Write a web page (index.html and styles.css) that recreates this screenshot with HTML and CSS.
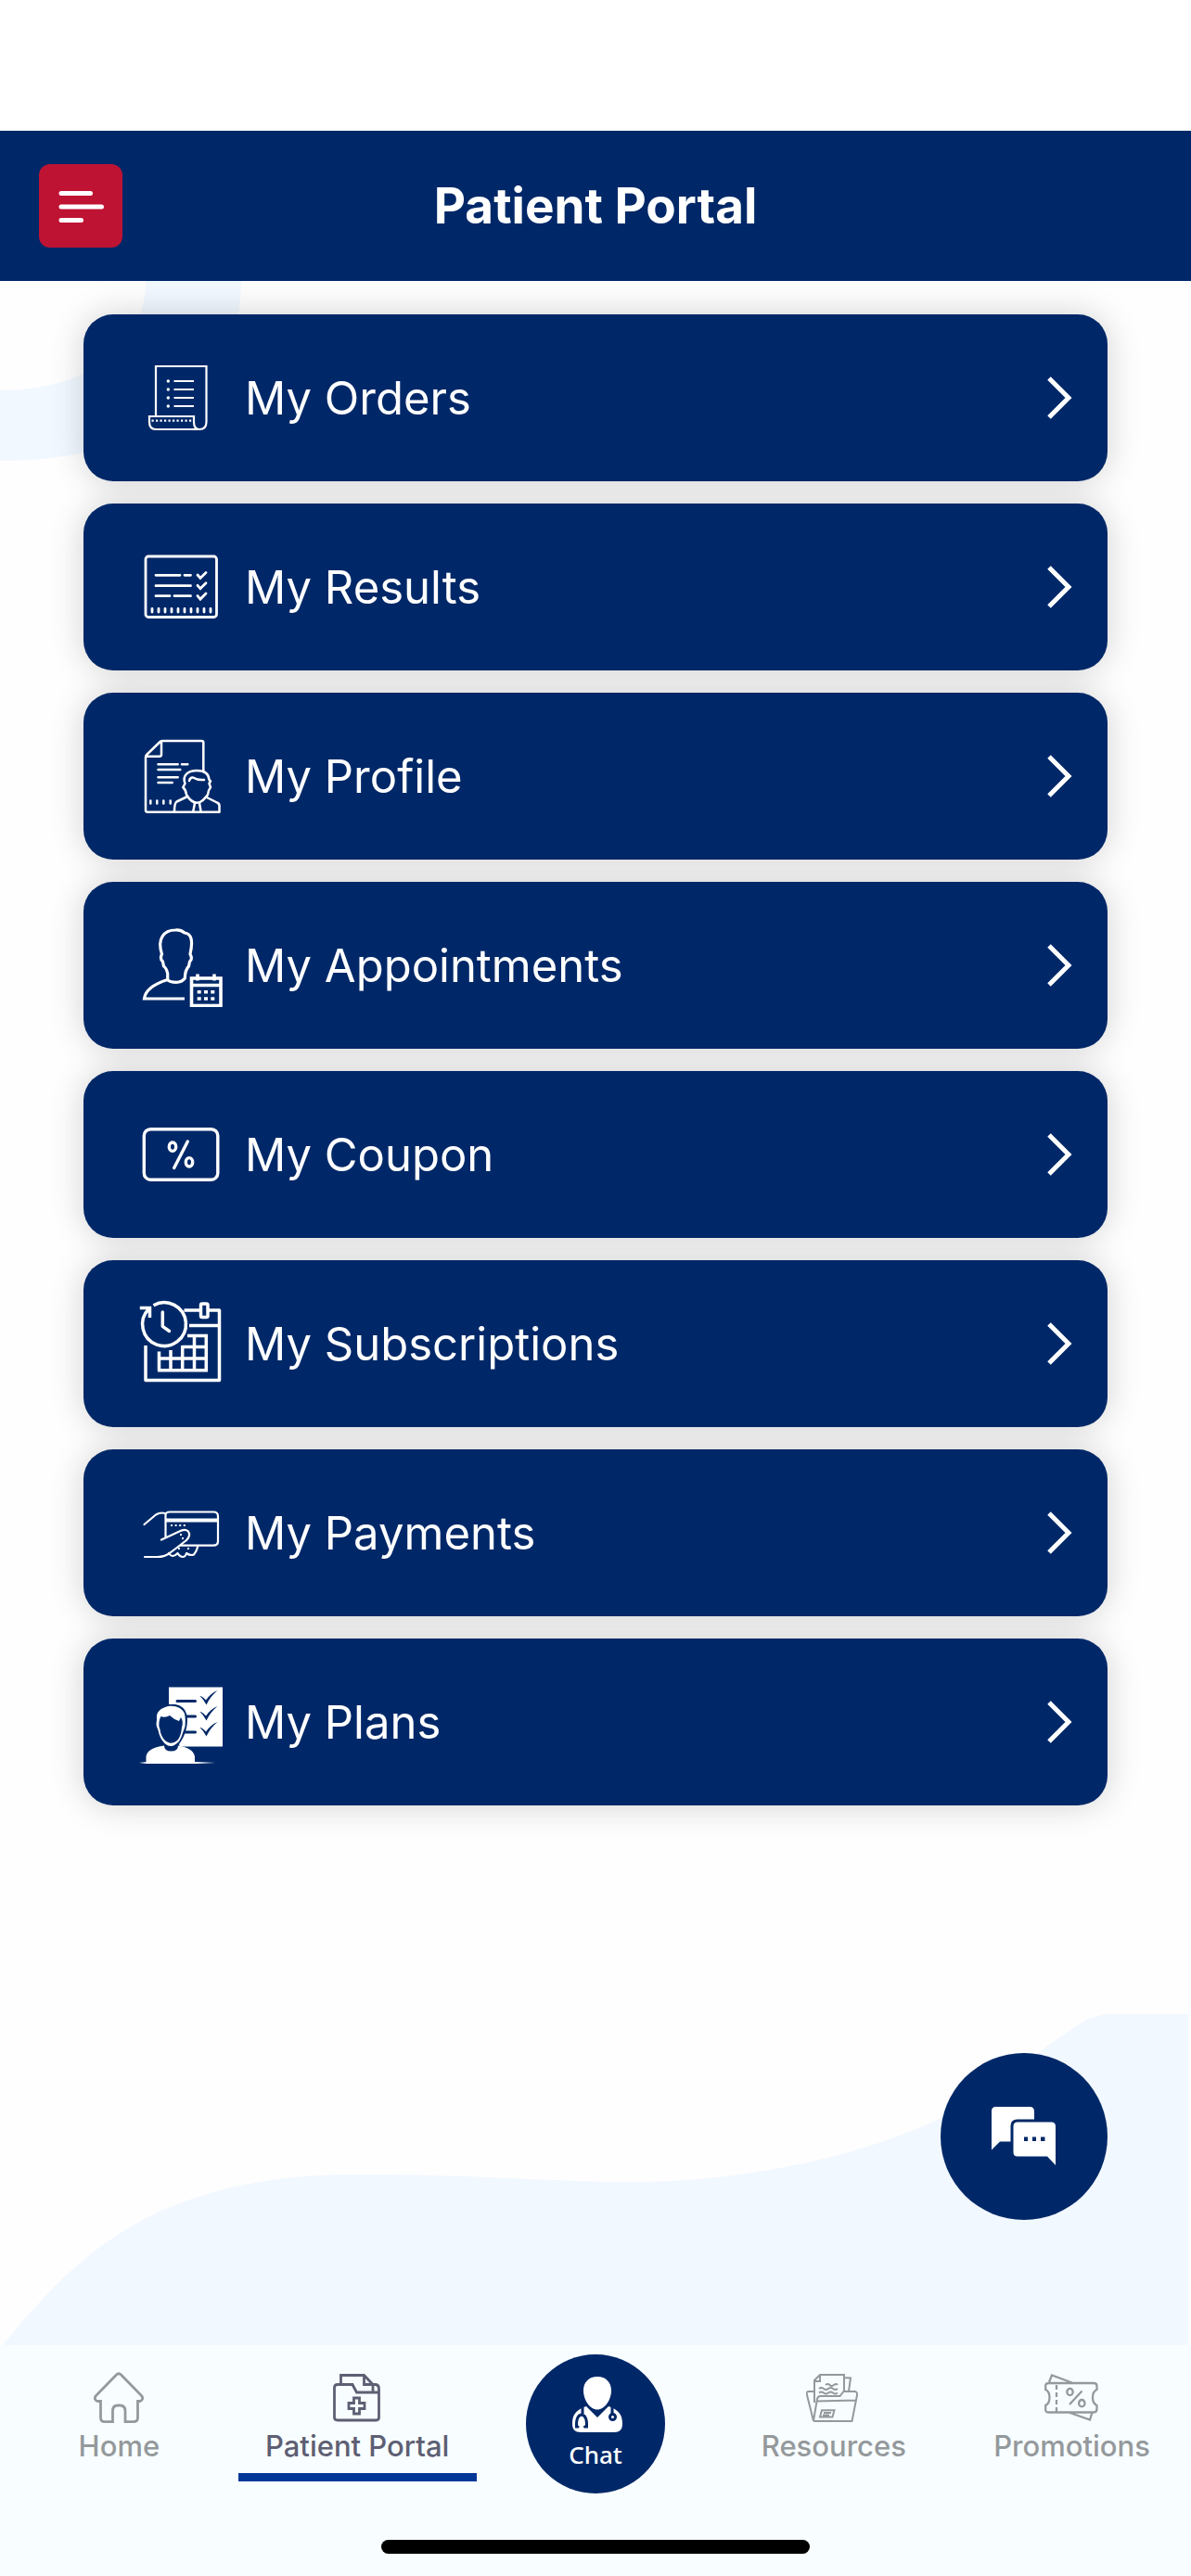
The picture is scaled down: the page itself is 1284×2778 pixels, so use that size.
FILE: index.html
```html
<!DOCTYPE html>
<html lang="en">
<head>
<meta charset="utf-8">
<meta name="viewport" content="width=device-width, initial-scale=1">
<title>Patient Portal</title>
<link rel="stylesheet" href="styles.css">
</head>
<body>
<div class="app">
  <header class="header">
    <button class="menu-button" type="button" aria-label="Menu">
      <svg viewBox="0 0 90 90" aria-hidden="true"><path d="M24 31.500H55.500M24 46H67.500M24 60.500H45.500"/></svg>
    </button>
    <h1 class="title">Patient Portal</h1>
  </header>

  <main class="main">
    <svg class="ring" viewBox="0 0 262 196" aria-hidden="true"><path d="M157 0C157 70 95 118 0 118V194C150 194 260 130 260 0Z"/></svg>
    <svg class="wave" viewBox="0 0 1284 357" preserveAspectRatio="none" aria-hidden="true"><path d="M3 357C70 278 150 174 380 173C500 172 600 181 680 181C830 181 960 142 1030 104C1090 70 1115 42 1150 20C1170 6 1180 0 1200 0H1281V357Z"/></svg>

    <ul class="list">
      <li><a class="card" href="#orders">
        <svg class="icon" viewBox="0 0 90 90" aria-hidden="true">
          <g stroke-width="2.200"><path d="M18 64.500V11H72.500V71Q72.500 79 65 79H18Q11 79 11 71V65H59V71Q59 79 65 79M37.500 27H59M37.500 36H59M37.500 45H59M37.500 54H59"/><path stroke-width="3.400" stroke-linecap="round" d="M31.300 27h.01M31.300 36h.01M31.300 45h.01M31.300 54h.01"/><path stroke-dasharray="2.200 2.300" d="M13.500 69.700H56.500"/></g>
        </svg>
        <span class="label">My Orders</span>
        <svg class="chevron" viewBox="0 0 28 48" aria-hidden="true"><path d="M3 3L24 24L3 45"/></svg>
      </a></li>
      <li><a class="card" href="#results">
        <svg class="icon" viewBox="0 0 90 90" aria-hidden="true">
          <rect x="7" y="12" width="76.500" height="65.500" rx="3"/>
          <path stroke-linecap="round" d="M18 32.300H44M49 32.300H55.500M18 43.700H55.500M18 54.700H33M38 54.700H55.500M63 32L66 35.500L72 29.500M63 43.300L66 46.800L72 40.800M63 54.600L66 58.100L72 52.100"/>
          <path stroke-linecap="round" d="M14 68.500v3.500M21 68.500v3.500M28 68.500v3.500M35 68.500v3.500M42 68.500v3.500M49 68.500v3.500M56 68.500v3.500M63 68.500v3.500M70 68.500v3.500M77 68.500v3.500"/>
        </svg>
        <span class="label">My Results</span>
        <svg class="chevron" viewBox="0 0 28 48" aria-hidden="true"><path d="M3 3L24 24L3 45"/></svg>
      </a></li>
      <li><a class="card" href="#profile">
        <svg class="icon" viewBox="0 0 90 90" aria-hidden="true">
          <g stroke-linecap="round" stroke-linejoin="round" stroke-width="2.500">
          <path d="M69.300 40V9Q69.300 7 67.300 7H25Q23 7 22 8.500L8 22Q7 23 7 25V81.500Q7 83.700 9 83.700H86.500V77Q86.500 74.500 84 73.500L72 67.500M24 8V21.500Q24 23.700 22 23.700H8"/>
          <path d="M20.500 32.300H41.700M46 32.300H52.300M20.500 38H44.300M20.500 46.300H41.700M20.500 52H35.700M12.300 71.500v3M19.300 71.500v3M26.300 71.500v3M33.700 71.500v3"/>
          <path d="M49.500 53C46 44 53 39 62.300 39C70 39 75 42 75.500 49L77 50.500L75.500 53L77 57Q74.500 60 74 65C70 70 67 73.700 62.300 73.700C58 73.700 54 70 51 65Q50.500 60 47.300 57Z"/>
          <path d="M54 50Q55 46 58 46.500Q63 49.500 70 49M51 67.500L40.500 72.500Q38 74 38 83M60 74L58.300 83M65 74L66.500 83"/>
          </g>
        </svg>
        <span class="label">My Profile</span>
        <svg class="chevron" viewBox="0 0 28 48" aria-hidden="true"><path d="M3 3L24 24L3 45"/></svg>
      </a></li>
      <li><a class="card" href="#appointments">
        <svg class="icon" viewBox="0 0 90 90" aria-hidden="true">
          <path stroke-width="3.200" d="M30.700 60.500V54Q29.500 48 26.500 46L25.500 41Q22 38 24.500 33C19 16 27 7 39 7Q45 6.500 49 10Q60 11 55 33Q58 38 54.500 41L53.500 46Q49.500 50 49.300 59Q46 63.300 40 63.300Q33 63.300 30.700 60.500Q7 68 5.500 81H49"/>
          <g stroke-width="3.600"><rect x="56.500" y="59" width="31.500" height="29.500"/><path d="M55 66.500H89"/><path d="M63 54.500V61.500M81 54.500V61.500"/><path stroke-dasharray="4 3.300" d="M62.700 73.700H81.500M62.700 81H81.500"/></g>
        </svg>
        <span class="label">My Appointments</span>
        <svg class="chevron" viewBox="0 0 28 48" aria-hidden="true"><path d="M3 3L24 24L3 45"/></svg>
      </a></li>
      <li><a class="card" href="#coupon">
        <svg class="icon" viewBox="0 0 90 90" aria-hidden="true">
          <g stroke-width="3.400"><rect x="5.300" y="17.700" width="79.500" height="54.500" rx="7"/><ellipse cx="36" cy="36.700" rx="3.700" ry="4.700"/><ellipse cx="54" cy="53.300" rx="3.700" ry="4.700"/><path stroke-linecap="round" d="M52.300 31L37.700 59.500"/></g>
        </svg>
        <span class="label">My Coupon</span>
        <svg class="chevron" viewBox="0 0 28 48" aria-hidden="true"><path d="M3 3L24 24L3 45"/></svg>
      </a></li>
      <li><a class="card" href="#subscriptions">
        <svg class="icon icon-open" viewBox="0 0 90 90" aria-hidden="true">
          <g stroke-width="3.500"><path d="M15.500 3.700A23.400 23.400 0 1 1 10.500 7.500M.800 6.500H11.500V17"/><path stroke-linecap="round" stroke-linejoin="round" d="M25.300 11V26.300L32.500 31.500"/>
          <path stroke-linejoin="round" d="M48.500 9H66.500M75 9H86.500V84.500H7V47M54 25.500H86.500"/><rect x="66.500" y="2" width="7.500" height="14.500" rx="1.500"/>
          <path d="M52 36.500H74M46.700 48.500H72.300M20 61H72.300M20 73.700H74M21.500 53.500V73.700M34 52V73.700M46.700 47V73.700M59.500 36V73.700M72.300 36V73.700"/></g>
        </svg>
        <span class="label">My Subscriptions</span>
        <svg class="chevron" viewBox="0 0 28 48" aria-hidden="true"><path d="M3 3L24 24L3 45"/></svg>
      </a></li>
      <li><a class="card" href="#payments">
        <svg class="icon" viewBox="0 0 90 90" aria-hidden="true">
          <g stroke-width="2.200" stroke-linejoin="round"><path d="M28.500 51V26Q28.500 22.500 33 22.500H80Q85 22.500 85 27V54Q85 58.700 80 58.700H44"/><path stroke-width="3.800" d="M28.500 31.500H85"/>
          <path stroke-linecap="round" d="M5.500 36L18 25.500Q23 22.500 28 24M24 52.500L45 42.800Q50 40.500 53 43.500Q56 48 51 53Q37 64 32 67.500Q27 71 20 71H6M32 67Q36 73 41.500 67Q44 71 47 71Q50 71 51 67Q55 70 59 68.500Q62 65 63.300 59.500"/>
          <path stroke-dasharray="2 2.600" d="M34 37H50"/><path d="M44 47h2M46 51h2M42 62h2M52 62h2"/></g>
        </svg>
        <span class="label">My Payments</span>
        <svg class="chevron" viewBox="0 0 28 48" aria-hidden="true"><path d="M3 3L24 24L3 45"/></svg>
      </a></li>
      <li><a class="card" href="#plans">
        <svg class="icon" viewBox="0 0 90 90" aria-hidden="true">
          <defs><linearGradient id="ground"><stop offset="0" stop-color="#fff" stop-opacity="0"/><stop offset=".1" stop-color="#fff"/><stop offset=".75" stop-color="#fff"/><stop offset="1" stop-color="#fff" stop-opacity="0"/></linearGradient></defs>
          <path class="solid" d="M32 7.500H90V71.500H32Z"/>
          <path class="cut-line" d="M41 22.500H60.500M41 39H60.500M41 56H60.500"/>
          <path class="cut" d="M65.500 17Q68 17 72 21.500Q77 14 84.500 11Q77 17 72.500 26.500Q69 20 65.500 17ZM65.500 34Q68 34 72 38.500Q77 31 84.500 28Q77 34 72.500 43.500Q69 37 65.500 34ZM65.500 51Q68 51 72 55.500Q77 48 84.500 45Q77 51 72.500 60.500Q69 54 65.500 51Z"/>
          <path class="cut" d="M17 48C15 33 22 25 35 26C48 25 54 35 51.500 49C50 58 46 65 43 69L45 75H25L27 68C20 61 18 56 17 48Z"/>
          <path class="solid" d="M7.500 89V83Q8 73 27 70.500Q27 76.500 34.500 76.500Q42 76.500 42 70.500Q59 73 60 83V89Z"/>
          <path class="solid" d="M19 50C18 45 19 46 19 42C18 33 24 31 28 29C35 26 46 28 49 36C50 41 50 45 49.500 50L48 54Q46 61 43 66Q38 71 34.500 71Q29 71 25 65Q22 61 20.500 54Z"/>
          <path class="cut" d="M21.500 50Q21 43 23.500 39Q28 41 33 38Q37 42 43 44L45 40Q48 45 46 51Q45 61 41 65Q34 71 27 64Q23 59 22.500 53Z"/>
          <rect x="0" y="88" width="82" height="2" fill="url(#ground)" stroke="none"/>
        </svg>
        <span class="label">My Plans</span>
        <svg class="chevron" viewBox="0 0 28 48" aria-hidden="true"><path d="M3 3L24 24L3 45"/></svg>
      </a></li>
    </ul>

    <button class="fab" type="button" aria-label="Messages">
      <svg viewBox="0 0 70 64" aria-hidden="true"><path d="M4.500 0H41Q46 0 46 5V13.500H28Q20.500 13.500 20.500 21V37.500H9L0 46.500V4.500Q0 0 4.500 0Z"/><path fill-rule="evenodd" d="M28 16.500H64.500Q69 16.500 69 21V63L60 53.500H28Q23.500 53.500 23.500 49V21Q23.500 16.500 28 16.500ZM35 32.500V37H39V32.500ZM44 32.500V37H48V32.500ZM53 32.500V37H57.500V32.500Z"/></svg>
    </button>
  </main>

  <footer class="footer">
    <nav class="tabs" aria-label="Main">
      <a class="tab" href="#home">
        <svg class="tab-icon" viewBox="0 0 60 60" aria-hidden="true"><g stroke-width="2.800"><path d="M27.500 5Q30 2.500 32.500 5L55 28Q57 32 53 33.500H50.500V51Q50.500 55.700 46 55.700H37V44Q37 38 31 38H29Q23.500 38 23.500 44V55.700H14.500Q10.500 55.700 10.500 51V33.500H7Q3 32 5 28Z"/></g></svg>
        <span>Home</span>
      </a>
      <a class="tab tab-active" href="#portal" aria-current="page">
        <svg class="tab-icon" viewBox="0 0 60 60" aria-hidden="true"><g stroke-width="2.800"><path d="M12.500 15V5.500H37.500L47 15.500M37.500 5.500V15.500H50Q53.500 16 53.500 20V51Q53.500 54 50.500 54H9Q5.500 54 5.500 51V19Q5.500 15.500 9 15.500H25L29.500 24H53.500M47 16V24"/><path d="M26.500 30H32.500V35.500H38V41.500H32.500V47H26.500V41.500H21V35.500H26.500Z"/></g></svg>
        <span>Patient Portal</span>
      </a>
      <div class="chat-slot">
        <a class="chat" href="#chat">
          <svg class="chat-icon" viewBox="0 0 60 60" aria-hidden="true"><path class="solid" d="M32 0C41 0 47 6 47 15C47 25 40 35.500 32 35.500C24 35.500 17 25 17 15C17 6 23 0 32 0ZM20 32L32 44L44 32C56 36 59 42 59 51C59 57 56 60 50 60H14C8 60 5 57 5 51C5 42 8 36 20 32Z"/><path class="cut-line" d="M16 33V41M11 54H9.500Q9 42 15 41Q21 42 20.500 54H18.500M48 33V40"/><circle class="cut-line" cx="48.500" cy="43.500" r="3"/></svg>
          <span>Chat</span>
        </a>
      </div>
      <a class="tab" href="#resources">
        <svg class="tab-icon" viewBox="0 0 60 60" aria-hidden="true"><g stroke-width="2"><path d="M9 35V11L15 5H41V23M15 5V12H9M41 8L48 8.500L46 23M9 23H3Q0 23 .8 26L8 54.700L12 31Q12.500 28 16 28H36.500L40.500 23H52Q55.500 23 55 27L49.500 55H8M11 33.500L54 32.500M17 43.300H30.500L28.500 50.500H15ZM19 46H27M18 48.500H25"/><path d="M21 16q2.500-2 4.500 0t4.500 0t4 0M14 20q2.500-2 5 0t5 0t5 0t5 0M14 24.500q2.500-2 5 0t5 0t5 0t5 0"/></g></svg>
        <span>Resources</span>
      </a>
      <a class="tab" href="#promotions">
        <svg class="tab-icon" viewBox="0 0 60 60" aria-hidden="true"><g stroke-width="2.300"><path d="M5 14H53Q56.500 14 56.500 17V21Q52 23 52 29.500Q52 36 56.500 38V42Q56.500 45.500 53 45.500H4Q1 45.500 1.200 42V38Q5.500 36 5.500 29.500Q5.500 23 1.200 21V17Q1 14 5 14ZM5 13L8 5.500L31 14M26 45.500L49 53.500L51.500 45.500"/><path stroke-dasharray="5 3" d="M13 16V45"/><ellipse cx="27.500" cy="23.500" rx="3.200" ry="3.700"/><ellipse cx="40.300" cy="35.700" rx="3.200" ry="3.700"/><path d="M40.500 22.500L27 37"/></g></svg>
        <span>Promotions</span>
      </a>
    </nav>
    <div class="home-indicator"></div>
  </footer>
</div>
</body>
</html>
```
FILE: styles.css
```css
:root {
  --navy: #002868;
  --red: #bf1334;
  --tint: #f2f8ff;
  --footer: #f8fdff;
  --muted: #94999c;
  --active: #5d5f73;
}

* { box-sizing: border-box; }

body {
  margin: 0;
  background: #fff;
  font-family: Inter, "Liberation Sans", sans-serif;
}

a { text-decoration: none; }
button { border: 0; padding: 0; font: inherit; cursor: pointer; }
svg { display: block; fill: none; }

.app {
  display: flex;
  flex-direction: column;
  min-height: 100vh;
  padding-top: 141px;
}

.header {
  display: grid;
  grid-template-columns: 90px 1fr 90px;
  align-items: center;
  padding: 36px 42px;
  background: var(--navy);
}

.menu-button {
  height: 90px;
  border-radius: 12px;
  background: var(--red);
}
.menu-button path { stroke: #fff; stroke-width: 5; stroke-linecap: round; }

.title {
  margin: 0;
  color: #fff;
  font-size: 53px;
  font-weight: 700;
  line-height: 60px;
  text-align: center;
}

.main {
  position: relative;
  flex: 1;
  padding: 36px 90px;
  background: #fefefe;
}

/* Background artwork behind the list */
.ring { position: absolute; top: 0; left: 0; width: 262px; fill: var(--tint); }
.wave { position: absolute; bottom: 0; left: 0; width: 100%; height: 357px; fill: var(--tint); }

.list {
  position: relative;
  display: grid;
  gap: 24px;
  margin: 0;
  padding: 0;
  list-style: none;
}

.card {
  display: flex;
  align-items: center;
  gap: 24px;
  height: 180px;
  padding: 0 38px 0 60px;
  border-radius: 32px;
  background: var(--navy);
  box-shadow: 0 0 36px rgba(0, 0, 0, .18);
  color: #fff;
}

.icon { flex: none; width: 90px; height: 90px; stroke: #fff; stroke-width: 2.8; }
.icon-open { overflow: visible; }
.label { flex: 1; padding-top: 2px; font-size: 49px; line-height: 60px; }
.chevron { flex: none; width: 28px; height: 48px; stroke: #fff; stroke-width: 5; }

.solid { fill: #fff; stroke: none; }
.cut { fill: var(--navy); stroke: none; }
.cut-line { stroke: var(--navy); stroke-width: 3; stroke-linecap: round; }

.fab {
  position: absolute;
  right: 90px;
  bottom: 135px;
  display: grid;
  place-items: center;
  width: 180px;
  height: 180px;
  border-radius: 50%;
  background: var(--navy);
}
.fab svg { width: 70px; height: 64px; fill: #fff; }

.footer {
  display: flex;
  flex-direction: column;
  align-items: center;
  justify-content: space-between;
  height: 249px;
  padding-bottom: 24px;
  background: var(--footer);
}

.tabs {
  display: grid;
  grid-template-columns: repeat(5, 1fr);
  width: 100%;
}

.tab {
  display: flex;
  flex-direction: column;
  align-items: center;
  gap: 2px;
  height: 147px;
  padding-top: 27px;
  border-bottom: 9px solid transparent;
  color: var(--muted);
  font-size: 31px;
  font-weight: 500;
  line-height: 40px;
  white-space: nowrap;
}
.tab-active { border-color: #003897; color: var(--active); }
.tab-icon { width: 60px; height: 60px; stroke: currentColor; }

.chat-slot { display: flex; justify-content: center; padding-top: 10px; }
.chat {
  display: flex;
  flex-direction: column;
  align-items: center;
  gap: 6px;
  width: 150px;
  height: 150px;
  padding-top: 24px;
  border-radius: 50%;
  background: var(--navy);
  color: #fff;
  font-family: "Noto Sans", sans-serif;
  font-size: 26px;
  font-weight: 500;
  line-height: 36px;
}
.chat-icon { width: 60px; height: 60px; }

.home-indicator {
  width: 36%;
  height: 15px;
  border-radius: 8px;
  background: #000;
}
```
